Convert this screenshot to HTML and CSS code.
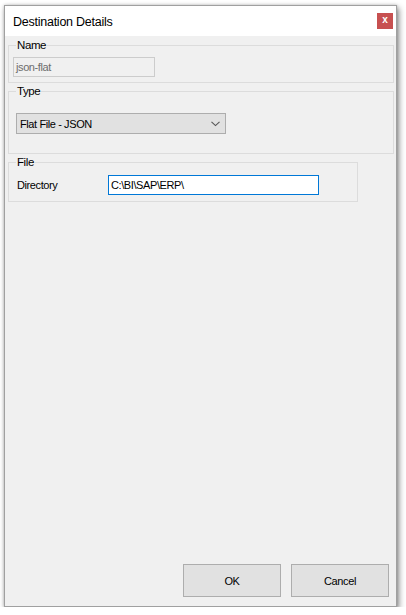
FILE: index.html
```html
<!DOCTYPE html>
<html>
<head>
<meta charset="utf-8">
<link rel="stylesheet" href="styles.css">
</head>
<body>
<div class="window">
  <div class="titlebar">
    <span class="title">Destination Details</span>
    <span class="close">x</span>
  </div>
  <div class="content">
    <fieldset class="group group-name">
      <legend>Name</legend>
      <div class="textbox disabled">json-flat</div>
    </fieldset>
    <fieldset class="group group-type">
      <legend>Type</legend>
      <div class="combo">
        <span>Flat File - JSON</span>
        <svg class="chev" width="9" height="6" viewBox="0 0 9 6"><path d="M0.5 0.8 L4.5 4.6 L8.5 0.8" fill="none" stroke="#555" stroke-width="1.1"/></svg>
      </div>
    </fieldset>
    <fieldset class="group group-file">
      <legend>File</legend>
      <div class="row">
        <span class="label">Directory</span>
        <div class="textbox focused">C:\BI\SAP\ERP\</div>
      </div>
    </fieldset>
    <div class="buttons">
      <div class="btn">OK</div>
      <div class="btn">Cancel</div>
    </div>
  </div>
</div>
</body>
</html>
```

FILE: styles.css
```css
* { box-sizing: border-box; }
html, body { margin: 0; padding: 0; background: #ffffff; }
body {
  padding: 5px 0 0 4px;
  font-family: "Liberation Sans", Arial, sans-serif;
  font-size: 11px;
  letter-spacing: -0.4px;
  color: #000;
}
.window {
  width: 393px;
  height: 602px;
  background: #f0f0f0;
  border: 1px solid #a0a0a0;
  box-shadow: 2px 3px 6px rgba(0,0,0,0.45), 0 0 3px rgba(0,0,0,0.2);
  display: flex;
  flex-direction: column;
}
.titlebar {
  height: 30px;
  background: #ffffff;
  display: flex;
  align-items: center;
  justify-content: space-between;
  padding: 0 3px 0 8px;
}
.title {
  font-size: 12.5px;
  letter-spacing: -0.25px;
  margin-top: 1px;
}
.close {
  width: 16px;
  height: 16px;
  background: #c75050;
  color: #fff;
  font-weight: bold;
  font-size: 10px;
  letter-spacing: 0;
  display: flex;
  align-items: center;
  justify-content: center;
  line-height: 1;
  padding-bottom: 2px;
}
.content {
  flex: 1;
  display: flex;
  flex-direction: column;
  padding: 2px 2px 9px 3px;
}
.group {
  margin: 0;
  padding: 0;
  border: 1px solid #dcdcdc;
  min-width: 0;
}
.group legend {
  padding: 0 1px;
  margin-left: 7px;
  line-height: 14px;
  font-size: 11.5px;
}
.group-name {
  width: 386px;
  height: 45px;
}
.group-name .textbox { margin: 5px 0 0 4px; }
.group-type {
  width: 386px;
  height: 70px;
  margin-top: 1px;
}
.group-type .combo { margin: 15px 0 0 7px; }
.group-file {
  width: 350px;
  height: 47px;
  margin-top: 1px;
}
.group-file .row { margin: 6px 0 0 8px; }
.textbox {
  height: 20px;
  line-height: 18px;
  padding: 0 2px;
  background: #fff;
  border: 1px solid #7a7a7a;
  white-space: nowrap;
}
.textbox.disabled {
  width: 142px;
  height: 20px;
  background: #f0f0f0;
  border-color: #cccccc;
  color: #6d6d6d;
}
.textbox.focused {
  width: 211px;
  border-color: #0078d7;
}
.combo {
  width: 210px;
  height: 21px;
  background: #e1e1e1;
  border: 1px solid #adadad;
  display: flex;
  align-items: center;
  justify-content: space-between;
  padding: 0 5px 0 3px;
}
.chev { margin-top: 1px; }
.row {
  display: flex;
  align-items: center;
}
.label { width: 91px; }
.buttons {
  margin-top: auto;
  display: flex;
  justify-content: flex-end;
  gap: 10px;
  padding-right: 5px;
}
.btn {
  width: 98px;
  height: 33px;
  background: #e1e1e1;
  border: 1px solid #adadad;
  display: flex;
  align-items: center;
  justify-content: center;
}
```
